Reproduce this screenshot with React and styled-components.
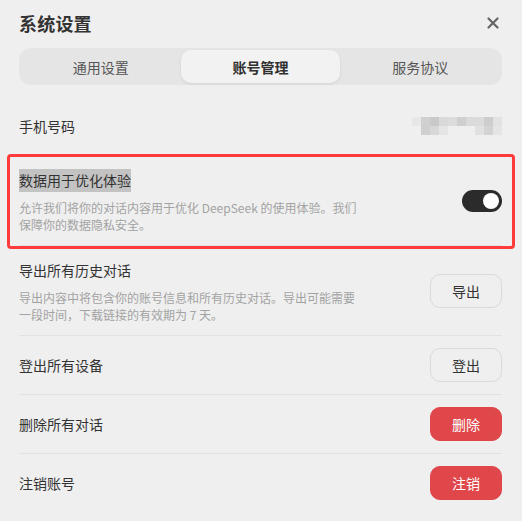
import React from 'react';
import styled, { createGlobalStyle } from 'styled-components';

const GlobalStyle = createGlobalStyle`
	html, body {
		margin: 0;
		padding: 0;
		background: #efefef;
	}
	body {
		font-family: "Noto Sans CJK SC", "Noto Sans", sans-serif;
		color: #333;
	}
`;

// mosaic cells over the phone number: [x, y, colour]
const mosaic = [
	[0, 0, '#e7e7e7'], [9, 0, '#d0d0d0'], [18, 0, '#c9c9c9'], [27, 0, '#d9d9d9'], [36, 0, '#dcdcdc'],
	[45, 0, '#cfcfcf'], [54, 0, '#dadada'], [63, 0, '#dbdbdb'], [72, 0, '#cdcdcd'], [81, 0, '#e2e2e2'],
	[9, 9, '#cfcfcf'], [18, 9, '#d7d7d7'], [27, 9, '#e5e5e5'],
	[63, 9, '#e1e1e1'], [72, 9, '#d3d3d3'], [81, 9, '#e5e5e5'],
];

const App = () => {
	return (
		<>
			<GlobalStyle />
			<Dialog>
				<Header>
					<Title>系统设置</Title>
					<CloseButton aria-label="关闭">
						<svg width="12" height="12" viewBox="0 0 12 12">
							<path d="M1.5 1.5 L10.5 10.5 M10.5 1.5 L1.5 10.5" stroke="#666" strokeWidth="2.2" strokeLinecap="round" />
						</svg>
					</CloseButton>
				</Header>

				<Tabs>
					<Tab>通用设置</Tab>
					<Tab $active>账号管理</Tab>
					<Tab>服务协议</Tab>
				</Tabs>

				<List>
					<Row>
						<Label>手机号码</Label>
						<svg width="90" height="18" viewBox="0 0 90 18">
							{mosaic.map(([x, y, c]) => (
								<rect key={`${x}-${y}`} x={x} y={y} width="9" height="9" fill={c} />
							))}
						</svg>
					</Row>

					<Row $marked>
						<Info>
							<Label><Selected>数据用于优化体验</Selected></Label>
							<Desc>允许我们将你的对话内容用于优化 DeepSeek 的使用体验。我们保障你的数据隐私安全。</Desc>
						</Info>
						<Toggle $on />
					</Row>

					<Row>
						<Info>
							<Label>导出所有历史对话</Label>
							<Desc>导出内容中将包含你的账号信息和所有历史对话。导出可能需要一段时间，下载链接的有效期为 7 天。</Desc>
						</Info>
						<Button>导出</Button>
					</Row>

					<Row>
						<Label>登出所有设备</Label>
						<Button>登出</Button>
					</Row>

					<Row>
						<Label>删除所有对话</Label>
						<Button $danger>删除</Button>
					</Row>

					<Row>
						<Label>注销账号</Label>
						<Button $danger>注销</Button>
					</Row>
				</List>
			</Dialog>
		</>
	);
};

const Dialog = styled.div`
	padding: 10px 20px 0 19px;
`;

const Header = styled.div`
	display: flex;
	align-items: center;
	justify-content: space-between;
	height: 26px;
`;

const Title = styled.div`
	font-size: 18px;
	font-weight: 700;
	color: #333;
	letter-spacing: 0.2px;
`;

const CloseButton = styled.div`
	display: flex;
	align-items: center;
	justify-content: center;
	width: 12px;
	height: 12px;
	margin-right: 3px;
	cursor: pointer;
`;

const Tabs = styled.div`
	display: flex;
	margin-top: 12px;
	height: 37px;
	padding: 2px;
	box-sizing: border-box;
	background: #e5e5e5;
	border-radius: 12px;
`;

const Tab = styled.div`
	flex: 1;
	display: flex;
	align-items: center;
	justify-content: center;
	font-size: 14px;
	border-radius: 10px;
	color: ${p => (p.$active ? '#2f2f2f' : '#555')};
	font-weight: ${p => (p.$active ? 600 : 400)};
	background: ${p => (p.$active ? '#f2f2f2' : 'transparent')};
	box-shadow: ${p => (p.$active ? '0 1px 3px rgba(0, 0, 0, 0.08)' : 'none')};
`;

const List = styled.div`
	margin-top: 12px;
`;

const Row = styled.div`
	position: relative;
	display: flex;
	align-items: center;
	justify-content: space-between;
	min-height: 34px;
	padding: 12px 0;
	border-bottom: 1px solid #e2e2e2;

	&:last-child {
		border-bottom: none;
	}

	${p => p.$marked && `
		&::after {
			content: '';
			position: absolute;
			top: -2px;
			bottom: -4px;
			left: -12px;
			right: -13px;
			border: 3px solid #ff3b3b;
			border-radius: 4px;
			pointer-events: none;
		}
	`}
`;

const Info = styled.div`
	display: flex;
	flex-direction: column;
	max-width: 340px;
`;

const Label = styled.div`
	font-size: 14px;
	line-height: 24px;
	color: #333;
`;

const Selected = styled.span`
	display: inline-block;
	line-height: 23px;
	background: #c3c3c3;
`;

const Desc = styled.div`
	margin-top: 7px;
	font-size: 12px;
	line-height: 17px;
	color: #a3a3a3;
`;

const Toggle = styled.div`
	position: relative;
	width: 40px;
	height: 22px;
	border-radius: 11px;
	background: ${p => (p.$on ? '#2b2b2b' : '#d0d0d0')};
	flex-shrink: 0;

	&::after {
		content: '';
		position: absolute;
		top: 3px;
		left: ${p => (p.$on ? '21px' : '3px')};
		width: 16px;
		height: 16px;
		border-radius: 50%;
		background: #fff;
	}
`;

const Button = styled.div`
	display: flex;
	align-items: center;
	justify-content: center;
	flex-shrink: 0;
	width: 72px;
	height: 34px;
	box-sizing: border-box;
	border-radius: 10px;
	font-size: 14px;
	cursor: pointer;
	color: ${p => (p.$danger ? '#fff' : '#333')};
	background: ${p => (p.$danger ? '#e0474b' : 'transparent')};
	border: 1px solid ${p => (p.$danger ? '#e0474b' : '#dadada')};
`;

export default App;
